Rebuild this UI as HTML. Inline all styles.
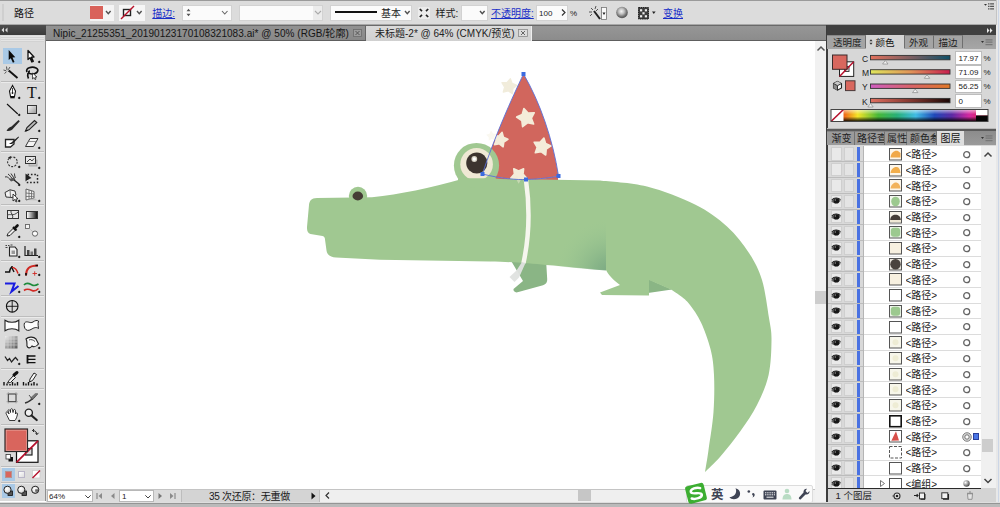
<!DOCTYPE html>
<html lang="zh"><head><meta charset="utf-8"><title>Illustrator</title><style>
*{box-sizing:border-box;margin:0;padding:0}
html,body{width:1000px;height:507px;overflow:hidden;background:#fff}
body{position:relative;font-family:"Liberation Sans","Noto Sans CJK SC",sans-serif;font-size:10px;color:#1a1a1a;line-height:1}
.a{position:absolute}
.t{position:absolute;white-space:nowrap;line-height:12px;height:12px}
.lnk{color:#1a2fc8;text-decoration:underline}
.wb{position:absolute;background:#fff;border:1px solid #c9c9c9}
svg{position:absolute;overflow:visible}
</style></head><body>
<div class="a" style="left:46px;top:41px;width:769px;height:448px;background:#fff"></div>
<svg style="left:0;top:0" width="1000" height="507" viewBox="0 0 1000 507">
<defs>
<radialGradient id="sh" gradientUnits="userSpaceOnUse" cx="610" cy="274" r="56"><stop offset="0" stop-color="#78a682"/><stop offset="0.3" stop-color="#84b287" stop-opacity="0.85"/><stop offset="0.65" stop-color="#93bf8e" stop-opacity="0.5"/><stop offset="1" stop-color="#9fc993" stop-opacity="0"/></radialGradient>
<clipPath id="hatclip"><path d="M523.500 74 C512 98 494 138 482.500 174 C500 178.500 518 180 526 179.500 C540 179 552 177.500 558.500 176 C553 140 540 102 523.500 74 Z"/></clipPath>
</defs>
<polygon points="510.4,78.6 512.2,83.4 516.9,85.4 512.9,88.6 512.5,93.7 508.2,90.8 503.2,92.1 504.6,87.1 501.9,82.7 507.1,82.5" fill="#f1ecdb" stroke="#f1ecdb" stroke-width="1.200" stroke-linejoin="round"/>
<polygon points="491.0,130.5 493.1,133.4 496.6,133.9 494.4,136.7 495.1,140.2 491.8,139.0 488.7,140.7 488.7,137.2 486.1,134.8 489.5,133.7" fill="#faf8f0"/>
<path d="M523.500 74 C512 98 494 138 482.500 174 C500 178.500 518 180 526 179.500 C540 179 552 177.500 558.500 176 C553 140 540 102 523.500 74 Z" fill="#d1665d"/>
<path d="M484 174.300 C500 178.500 518 180 526 179.500 C540 179 552 177.500 558 176 L558 181 L484 181 Z" fill="#d1665d"/>
<g clip-path="url(#hatclip)" fill="#f4ecd9" stroke="#f4ecd9" stroke-width="1.600" stroke-linejoin="round">
<polygon points="523.9,108.5 528.1,113.0 534.3,112.7 531.4,118.2 533.6,124.0 527.5,122.8 522.6,126.7 521.8,120.5 516.6,117.1 522.2,114.5"/>
<polygon points="543.9,138.0 545.6,143.5 551.0,145.9 546.2,149.2 545.7,155.0 541.0,151.6 535.3,152.8 537.2,147.3 534.2,142.3 540.0,142.4"/>
<polygon points="502.1,132.4 503.4,137.2 507.9,139.3 503.8,142.0 503.1,146.8 499.3,143.8 494.5,144.7 496.2,140.1 493.9,135.8 498.8,136.0"/>
<polygon points="518.7,183.8 516.1,179.1 510.8,178.1 514.4,174.1 513.8,168.8 518.7,171.0 523.6,168.8 523.0,174.1 526.6,178.1 521.3,179.1"/>
<polygon points="510.4,78.6 512.2,83.4 516.9,85.4 512.9,88.6 512.5,93.7 508.2,90.8 503.2,92.1 504.6,87.1 501.9,82.7 507.1,82.5"/>
</g>
<path d="M510 259 L523 281 L513.500 289 C513 291 515 292.800 517.500 292.300 L543 285.200 C546 284.300 547.500 282 547.200 279 L546 259 Z" fill="#8ab585"/>
<path d="M648 279 L672 289.500 L648 293 Z" fill="#8ab585"/>
<polygon points="517.0,175.0 518.9,178.3 522.7,179.1 520.1,182.0 520.5,185.9 517.0,184.3 513.5,185.9 513.9,182.0 511.3,179.1 515.1,178.3" fill="#eee9d6"/>
<path d="M317 198 L372 197.300 C400 194.300 430 188 462 179 C475 176 490 178 500 179 L600 180.500 C607.8 181.5 631.2 182.5 647.0 186.5 C662.8 190.5 681.7 197.8 695.0 204.5 C708.3 211.2 718.0 218.4 727.0 226.5 C736.0 234.6 743.2 244.1 749.0 253.0 C754.8 261.9 758.7 269.2 762.0 280.0 C765.3 290.8 767.4 308.0 769.0 318.0 C770.6 328.0 771.6 330.5 771.5 340.0 C771.4 349.5 771.0 364.2 768.6 375.0 C766.2 385.8 761.7 395.7 757.0 405.0 C752.3 414.3 746.7 422.3 740.5 431.0 C734.3 439.7 725.9 450.2 720.0 457.0 C714.1 463.8 707.5 469.5 705.0 472.0 C705.6 468.3 707.1 460.0 708.5 450.0 C709.9 440.0 712.6 424.5 713.5 412.0 C714.4 399.5 714.5 385.5 714.0 375.0 C713.5 364.5 712.7 357.8 710.5 349.0 C708.3 340.2 704.4 329.8 701.0 322.5 C697.6 315.2 693.2 309.2 690.0 305.0 C686.8 300.8 685.2 299.6 682.0 297.0 C678.8 294.4 672.8 290.8 671.0 289.5 L649 280 L649 295.500 L602 295 L600 292.500 L620 285 C612 279 608 274 606 270 L606 270 C590 269 565 266.500 546 265 C530 263.600 515 262 490 261.500 L380 259.800 L336 257.600 C331 257.300 327 255 326.500 250.500 L325 239.500 C325 238 324.500 236.500 322.500 236 L310.500 234 C308 233.500 306.800 231 307 227 L309 205 C309.500 201 311 198 317 198 Z" fill="#a0c891"/>
<path d="M540 215 L606 215 L606 270.500 C590 269.500 565 267 540 264.800 Z" fill="url(#sh)"/>
<polygon points="518.7,183.8 516.1,179.1 510.8,178.1 514.4,174.1 513.8,168.8 518.7,171.0 523.6,168.8 523.0,174.1 526.6,178.1 521.3,179.1" fill="#f4ecd9" opacity="0.450"/>
<circle cx="358" cy="196" r="9.200" fill="#a0c891"/>
<ellipse cx="357.800" cy="196" rx="5.300" ry="4.400" fill="#453c35"/>
<circle cx="476.500" cy="165.500" r="22.600" fill="#a0c891"/>
<circle cx="476.600" cy="164.200" r="16.300" fill="#efe8d4"/>
<circle cx="476.800" cy="163" r="10.600" fill="#3d342f"/>
<circle cx="474.300" cy="159" r="2.900" fill="#d8d2c4"/>
<circle cx="474.300" cy="159" r="1.700" fill="#fff"/>
<path d="M458 178.300 L496 178.300 L496 186 L458 186 Z" fill="#a0c891"/>
<path d="M526 180 C529.500 205 529.500 235 523.500 263" fill="none" stroke="#f6f6ee" stroke-width="4.500"/>
<path d="M522 262 L525.500 263 L519 277.500 L514.500 282 L509.500 277 L516.500 270.500 Z" fill="#dfe2df" opacity="0.950"/>
<path d="M523.500 74 C512 98 494 138 482.500 174 C500 178.500 518 180 526 179.500 C540 179 552 177.500 558.500 176 C553 140 540 102 523.500 74 Z" fill="none" stroke="#5a6fd8" stroke-width="0.9"/>
<rect x="521.5" y="72" width="4" height="4" fill="#3b6be0"/>
<rect x="480.5" y="172" width="4" height="4" fill="#3b6be0"/>
<rect x="556.5" y="174" width="4" height="4" fill="#3b6be0"/>
<rect x="524" y="177.5" width="4" height="4" fill="#3b6be0"/>
</svg>
<div class="a" style="left:815px;top:41px;width:11px;height:448px;background:#f1f1f1"></div>
<div class="a" style="left:815px;top:291px;width:11px;height:12.500px;background:#cdcdcd"></div>
<svg style="left:817px;top:46px" width="8" height="6"><path d="M0.500 4.500 L4 1 L7.500 4.500" fill="none" stroke="#555" stroke-width="1.500"/></svg>
<div class="a" style="left:0px;top:0px;width:1000px;height:25px;background:#dcdcdc;"></div>
<div class="a" style="left:0px;top:0px;width:1000px;height:1px;background:#9a9a9a;"></div>
<div class="a" style="left:0px;top:24px;width:1000px;height:1px;background:#a8a8a8;"></div>
<div class="a" style="left:2px;top:4px;width:2px;height:17px;background:#cfcfcf;"></div>
<div class="t " style="left:14px;top:7.9px;font-size:10px;color:#111">路径</div>
<div class="a" style="left:90px;top:4.5px;width:24px;height:16px;background:#f4f4f4;"></div>
<div class="a" style="left:90px;top:6px;width:13px;height:13px;background:#d9625a;"></div>
<svg style="left:106px;top:11px" width="4.6" height="3.7"><path d="M0 0 L2.3 2.7 L4.6 0" fill="none" stroke="#505050" stroke-width="1.4"/></svg>
<div class="a" style="left:119px;top:4.5px;width:26px;height:16px;background:#f6f6f6;"></div>
<svg style="left:120px;top:5px" width="15" height="15"><rect x="3.5" y="4.500" width="7" height="6" fill="#fff" stroke="#222" stroke-width="1.4"/><path d="M1 14 L14 1" stroke="#b8122a" stroke-width="1.5"/></svg>
<svg style="left:137px;top:11px" width="4.6" height="3.7"><path d="M0 0 L2.3 2.7 L4.6 0" fill="none" stroke="#505050" stroke-width="1.4"/></svg>
<div class="t lnk" style="left:152.3px;top:7.9px;">描边:</div>
<div class="a" style="left:182px;top:4.5px;width:50px;height:16px;background:#fbfbfb;border:1px solid #d2d2d2"></div>
<svg style="left:186px;top:8px" width="5" height="10"><path d="M0.500 3.300 L2.500 0.800 L4.500 3.300 Z M0.500 5.700 L2.500 8.200 L4.500 5.700 Z" fill="#555"/></svg>
<svg style="left:221.5px;top:11px" width="5.5" height="4"><path d="M0 0 L2.75 3 L5.5 0" fill="none" stroke="#666" stroke-width="1.1"/></svg>
<div class="a" style="left:239px;top:4.5px;width:84px;height:16px;background:#fbfbfb;border:1px solid #d2d2d2"></div>
<div class="a" style="left:313px;top:5.5px;width:9px;height:14px;background:#ececec;"></div>
<svg style="left:314.5px;top:11px" width="6" height="4"><path d="M0 0 L3.0 3 L6 0" fill="none" stroke="#aaa" stroke-width="1.1"/></svg>
<div class="a" style="left:330px;top:4.5px;width:82px;height:16px;background:#fbfbfb;border:1px solid #d2d2d2"></div>
<div class="a" style="left:334.5px;top:11.2px;width:42px;height:2px;background:#111;"></div>
<div class="t " style="left:381px;top:7.9px;">基本</div>
<svg style="left:404.5px;top:11px" width="4.6" height="3.7"><path d="M0 0 L2.3 2.7 L4.6 0" fill="none" stroke="#505050" stroke-width="1.4"/></svg>
<svg style="left:417.500px;top:7px" width="12" height="12"><rect x="0" y="0" width="12" height="12" rx="1.500" fill="#ececec"/><path d="M1.800 2 L4 4.200 M10.200 2 L8 4.200 M1.800 10 L4 7.800 M10.200 10 L8 7.800" stroke="#222" stroke-width="1.700"/></svg>
<div class="t " style="left:435.5px;top:7.9px;">样式:</div>
<div class="a" style="left:461px;top:4.5px;width:27px;height:16px;background:#fbfbfb;border:1px solid #d2d2d2"></div>
<svg style="left:479.5px;top:11px" width="4.6" height="3.7"><path d="M0 0 L2.3 2.7 L4.6 0" fill="none" stroke="#505050" stroke-width="1.4"/></svg>
<div class="t lnk" style="left:491px;top:7.9px;">不透明度:</div>
<div class="a" style="left:536px;top:4.5px;width:32px;height:16px;background:#fbfbfb;border:1px solid #d2d2d2"></div>
<div class="t " style="left:539px;top:8.3px;font-size:8px">100</div>
<svg style="left:561px;top:9px" width="5" height="8"><path d="M1 0.500 L4 3.5 L1 6.500" fill="none" stroke="#333" stroke-width="1.2"/></svg>
<div class="t " style="left:570px;top:8.3px;font-size:8px">%</div>
<svg style="left:587px;top:5px" width="22" height="16"><path d="M7 6 L13 14" stroke="#222" stroke-width="2"/><path d="M4 3 L6 5 M9 1 L8 4 M2 7 L5 7 M11 4 L9 6 M3 11 L5 9" stroke="#555" stroke-width="1"/><rect x="14.5" y="2.500" width="5" height="12" fill="#fafafa" stroke="#777" stroke-width="0.8"/><path d="M15.500 7.5 L18.5 7.5 L17 10 Z" fill="#222"/></svg>
<svg style="left:615px;top:5px" width="14" height="14"><defs><radialGradient id="gl" cx="0.45" cy="0.4" r="0.6"><stop offset="0" stop-color="#f4f4f4"/><stop offset="0.4" stop-color="#c0c0c0"/><stop offset="0.8" stop-color="#6a6a6a"/><stop offset="1" stop-color="#555"/></radialGradient></defs><circle cx="7" cy="7.500" r="5.8" fill="url(#gl)"/></svg>
<svg style="left:638px;top:6.500px" width="20" height="14"><rect x="0.500" y="0.500" width="10" height="11.500" fill="#3c3c3c" stroke="#222" stroke-width="1" stroke-dasharray="1.500 0.700"/><g fill="#ececec"><rect x="2" y="2.200" width="2.200" height="2.200"/><rect x="6.800" y="2.200" width="2.200" height="2.200"/><rect x="4.400" y="5.200" width="2.200" height="2.200"/><rect x="2" y="8.200" width="2.200" height="2.200"/><rect x="6.800" y="8.200" width="2.200" height="2.200"/></g><path d="M14 4.500 L17.600 4.500 L15.800 7 Z" fill="#222"/></svg>
<div class="t lnk" style="left:663px;top:7.9px;">变换</div>
<svg style="left:983.500px;top:3px" width="10" height="8"><path d="M0 1 L3 1 L1.500 2.800 Z" fill="#333"/><path d="M4 0.800 H10 M4 3.300 H10 M4 5.800 H10" stroke="#555" stroke-width="1.200" stroke-dasharray="1.500 0.600 10"/></svg>
<div class="a" style="left:0px;top:25px;width:826px;height:16px;background:linear-gradient(#979797,#8b8b8b);"></div>
<div class="a" style="left:46px;top:25px;width:780px;height:1px;background:#6a6a6a;"></div>
<div class="a" style="left:46px;top:26px;width:320px;height:14px;background:linear-gradient(#929292,#888888);border-right:1px solid #666"></div>
<div class="a" style="left:46px;top:40px;width:780px;height:1px;background:#5e5e5e;"></div>
<div class="t " style="left:53px;top:27.5px;font-size:10px;color:#151515;letter-spacing:0.050px">Nipic_21255351_20190123170108321083.ai* @ 50% (RGB/轮廓)</div>
<svg style="left:353px;top:29px" width="9" height="8"><rect x="0.5" y="0.500" width="8" height="7" fill="#9c9c9c" stroke="#6c6c6c" stroke-width="0.8"/><path d="M2.500 2 L6.500 6 M6.500 2 L2.500 6" stroke="#555" stroke-width="1"/></svg>
<div class="a" style="left:366px;top:25.5px;width:165.5px;height:15.5px;background:linear-gradient(#dadada,#d0d0d0);border-right:1px solid #eee"></div>
<div class="t " style="left:375px;top:27.5px;font-size:10px;color:#222">未标题-2* @ 64% (CMYK/预览)</div>
<svg style="left:518px;top:29px" width="10" height="8"><rect x="0.5" y="0.500" width="9" height="7" fill="#dcdcdc" stroke="#8a8a8a" stroke-width="0.8"/><path d="M3 2 L7 6 M7 2 L3 6" stroke="#666" stroke-width="1"/></svg>
<div class="a" style="left:0;top:25px;width:46px;height:476px;background:#dadada;border-right:1px solid #8f8f8f"></div>
<div class="a" style="left:0;top:25px;width:46px;height:10px;background:linear-gradient(#4e4e4e,#3a3a3a)"></div>
<svg style="left:0.8px;top:27px" width="8" height="6"><path d="M3 0.500 L0.500 3 L3 5.500 Z M6.500 0.500 L4 3 L6.500 5.500 Z" fill="#ddd"/></svg>
<div class="a" style="left:1px;top:36px;width:43px;height:6px;background:repeating-linear-gradient(#e4e4e4 0,#e4e4e4 1px,#d2d2d2 1px,#d2d2d2 2px)"></div>
<div class="a" style="left:2.500px;top:47.500px;width:19.500px;height:16.500px;background:#a9c9e6"></div>
<svg style="left:0px;top:0px" width="46" height="110"><path d="M8.700 50 L8.700 60 L10.800 58.200 L12.900 62.800 L14.500 62 L12.500 57.500 L15.300 57.200 Z" fill="#0a0a0a"/><path d="M28 50.500 L28 59.500 L30 57.800 L31.800 62 L33.300 61.300 L31.500 57.200 L34 57 Z" fill="#fff" stroke="#111" stroke-width="1.300" stroke-linejoin="round"/><path d="M30 57.800 L31.800 62 L33.300 61.300 L31.500 57.200 Z" fill="#111"/><path d="M8.800 70.500 L17.500 78" stroke="#111" stroke-width="1.900"/><path d="M6.500 66.500 L7 70 M3.500 70 L6.200 70.800 M10 67 L8.200 69.800 M4.500 73.500 L6.500 71.800 M9.500 72 L7.800 71" stroke="#444" stroke-width="0.9"/><path d="M27 72 C25 68 32 66 36 68 C40 70 37 74 32 74 C28 74 28 71 30 71 M28 73 C27.500 75 27.500 77 28.500 78.500" fill="none" stroke="#111" stroke-width="1.700"/><path d="M32.500 73 L32.500 79 L34 77.600 L35 79.600 L36 79.100 L35 77.100 L37 77 Z" fill="#fff" stroke="#111" stroke-width="0.7"/><path d="M12.500 85.500 L9.500 91 L10.500 96.500 L14.500 96.500 L15.500 91 Z" fill="#fff" stroke="#111" stroke-width="1.100"/><path d="M12.500 88 L12.500 92.500" stroke="#111" stroke-width="0.8"/><circle cx="12.500" cy="93" r="0.9" fill="#111"/><rect x="10.300" y="96.500" width="4.400" height="1.800" fill="#111"/><path d="M7 104 L17.800 114" stroke="#111" stroke-width="1.100"/></svg>
<div class="t" style="left:27px;top:85px;font-family:'Liberation Serif',serif;font-size:16px;line-height:16px;height:16px;color:#111">T</div>
<div class="a" style="left:38.3px;top:60.8px;width:2.400px;height:2.400px;background:#111;transform:rotate(45deg)"></div>
<div class="a" style="left:18.3px;top:96.8px;width:2.400px;height:2.400px;background:#111;transform:rotate(45deg)"></div>
<div class="a" style="left:38.3px;top:96.8px;width:2.400px;height:2.400px;background:#111;transform:rotate(45deg)"></div>
<div class="a" style="left:1px;top:81px;width:43px;height:1px;background:#bdbdbd"></div><div class="a" style="left:1px;top:82px;width:43px;height:1px;background:#ebebeb"></div>
<div class="a" style="left:18.3px;top:113.8px;width:2.400px;height:2.400px;background:#111;transform:rotate(45deg)"></div>
<div class="a" style="left:38.3px;top:113.8px;width:2.400px;height:2.400px;background:#111;transform:rotate(45deg)"></div>
<div class="a" style="left:26.500px;top:104.500px;width:10.500px;height:9px;border:1px solid #333;background:linear-gradient(135deg,#f4f4f4,#9a9a9a)"></div>
<svg style="left:0px;top:100px" width="46" height="60"><path d="M6.500 30.800 C8 28 10 27 11.500 26.500 L18.500 20 L19.800 21.300 L13.200 28.500 C12 30.500 9.500 31.500 6.500 30.800 Z" fill="#2a2a2a"/><path d="M25.500 31 L27 27.500 L34.500 20.500 L36.800 22.500 L29 29.800 Z" fill="#bbb" stroke="#222" stroke-width="1.100"/><path d="M25.500 31 L27.800 30.300" stroke="#111" stroke-width="1.200"/><path d="M5.500 39.500 L14 39.500 L14 44 L10.500 47 L5.500 47 Z" fill="#fff" stroke="#222" stroke-width="1.300"/><path d="M9 43.500 C11 43 12 42 13 41 L18.500 36.500 L19 37.200 L14 42.500 C13 44 11 44.500 9 43.500 Z" fill="#222"/><path d="M30 38.500 L38 38.500 L33.500 46.500 L25.500 46.500 Z" fill="#f4f4f4" stroke="#333" stroke-width="1"/><path d="M28.500 41.500 L36.300 41.500" stroke="#777" stroke-width="0.800"/></svg>
<div class="a" style="left:38.3px;top:130.3px;width:2.400px;height:2.400px;background:#111;transform:rotate(45deg)"></div>
<div class="a" style="left:38.3px;top:146.8px;width:2.400px;height:2.400px;background:#111;transform:rotate(45deg)"></div>
<div class="a" style="left:1px;top:150.5px;width:43px;height:1px;background:#bdbdbd"></div><div class="a" style="left:1px;top:151.5px;width:43px;height:1px;background:#ebebeb"></div>
<svg style="left:0px;top:150px" width="46" height="60"><circle cx="12.400" cy="11.800" r="4.800" fill="none" stroke="#333" stroke-width="1.100" stroke-dasharray="2 1.300"/><path d="M8 7.500 L11 6 L10.500 9.500 Z" fill="#222"/><rect x="29" y="10" width="8" height="6" fill="#c4c4c4" stroke="#999" stroke-width="0.700"/><rect x="25.500" y="6.500" width="10" height="7" fill="#e8e8e8" stroke="#333" stroke-width="1"/><path d="M27 12 L30 9 L32 11 L34 8.500" fill="none" stroke="#333" stroke-width="0.900"/><path d="M5 27 C8 26 9 29 11 30 M8 24 C10 25 11 28 13 29 M11 23.500 C12 25 13 27 14.500 28.500 M14.500 23.500 C14.500 25.500 15 27 15.500 28" fill="none" stroke="#333" stroke-width="1"/><path d="M9 29 L14 27.500 L15.500 30 L11 31.500 Z" fill="#555"/><path d="M14 30 L19 34" stroke="#222" stroke-width="1.500"/><rect x="27.500" y="24.500" width="10" height="8" fill="none" stroke="#222" stroke-width="1.500" stroke-dasharray="1.600 1.800"/><path d="M25.500 23.500 L25.500 31.500 L27.500 29.800 L31.500 28 Z" fill="#222"/><path d="M5 42.500 L10 39.800 L15 41 L16 45 L12 47.500 L6 47 Z" fill="#f2f2f2" stroke="#333" stroke-width="1"/><path d="M10 39.800 L10.500 47.300" stroke="#555" stroke-width="0.800"/><path d="M13 44 L13 51 L14.800 49.500 L16 52 L17 51.500 L15.800 49 L18 48.800 Z" fill="#fff" stroke="#111" stroke-width="0.800"/><path d="M26 39 L34 41.500 L34 48 L26 50 Z" fill="#f2f2f2" stroke="#555" stroke-width="0.900"/><path d="M29 40 L29 49.300 M31.500 40.800 L31.500 48.600 M26 43 L34 44 M26 46.500 L34 46.300" stroke="#666" stroke-width="0.800"/><path d="M34 48 L38 50.500 L26 50 Z" fill="#aaa" opacity="0.600"/></svg>
<div class="a" style="left:18.3px;top:166.3px;width:2.400px;height:2.400px;background:#111;transform:rotate(45deg)"></div>
<div class="a" style="left:38.3px;top:166.8px;width:2.400px;height:2.400px;background:#111;transform:rotate(45deg)"></div>
<div class="a" style="left:18.3px;top:183.8px;width:2.400px;height:2.400px;background:#111;transform:rotate(45deg)"></div>
<div class="a" style="left:18.3px;top:200.3px;width:2.400px;height:2.400px;background:#111;transform:rotate(45deg)"></div>
<div class="a" style="left:38.3px;top:199.8px;width:2.400px;height:2.400px;background:#111;transform:rotate(45deg)"></div>
<div class="a" style="left:1px;top:204px;width:43px;height:1px;background:#bdbdbd"></div><div class="a" style="left:1px;top:205px;width:43px;height:1px;background:#ebebeb"></div>
<div class="a" style="left:6.500px;top:210px;width:12px;height:8.500px;border:1px solid #333;background:#e6e6e6"></div>
<svg style="left:0px;top:205px" width="46" height="60"><path d="M7 10.500 C10 8 13 12 18 7 M11 5.500 C10 8 14 10 12.500 13.500" fill="none" stroke="#444" stroke-width="1"/><path d="M7 31 L8 28.500 L13.500 23 L15.500 25 L10 30.500 Z" fill="#eee" stroke="#222" stroke-width="1"/><path d="M13 22 L16.500 25.500" stroke="#111" stroke-width="2"/><path d="M14.500 23.500 L17.500 20.500" stroke="#111" stroke-width="2.600" stroke-linecap="round"/><rect x="25.500" y="19.500" width="4" height="4" fill="#f4f4f4" stroke="#666" stroke-width="0.900"/><path d="M29.500 23.500 L33 27" stroke="#aaa" stroke-width="1" stroke-dasharray="1 1"/><circle cx="35" cy="28.600" r="2.600" fill="#fafafa" stroke="#555" stroke-width="0.900"/><path d="M9.500 42 L15 42 L17 44.500 L17 51 L9.500 51 Z" fill="#f0f0f0" stroke="#222" stroke-width="1.100"/><rect x="11.500" y="45.500" width="3.500" height="3.500" fill="#999"/><path d="M5.500 40.500 H7 M8 40.500 H9.500 M5.500 42.500 H7.500 M10.500 40 H12.500" stroke="#333" stroke-width="0.900"/><path d="M25 41 L25 50.500 L38 50.500" fill="none" stroke="#222" stroke-width="1.200"/><rect x="27" y="45" width="2.500" height="5" fill="#444"/><rect x="30.500" y="46.500" width="2.500" height="3.500" fill="#777"/><rect x="34" y="43.500" width="2.500" height="6.500" fill="#444"/></svg>
<div class="a" style="left:26px;top:210.500px;width:12px;height:8px;border:1px solid #333;background:linear-gradient(90deg,#fff,#111)"></div>
<div class="a" style="left:18.3px;top:235.8px;width:2.400px;height:2.400px;background:#111;transform:rotate(45deg)"></div>
<div class="a" style="left:18.3px;top:255.8px;width:2.400px;height:2.400px;background:#111;transform:rotate(45deg)"></div>
<div class="a" style="left:38.3px;top:255.8px;width:2.400px;height:2.400px;background:#111;transform:rotate(45deg)"></div>
<div class="a" style="left:1px;top:239.5px;width:43px;height:1px;background:#bdbdbd"></div><div class="a" style="left:1px;top:240.5px;width:43px;height:1px;background:#ebebeb"></div>
<div class="a" style="left:1px;top:259.5px;width:43px;height:1px;background:#bdbdbd"></div><div class="a" style="left:1px;top:260.5px;width:43px;height:1px;background:#ebebeb"></div>
<svg style="left:0px;top:260px" width="46" height="60"><path d="M5 12 L9.500 12 C10 9 11 7.500 12 7.500 L12 6" fill="none" stroke="#111" stroke-width="1.600"/><path d="M12 7.500 C15 7.500 17 10 18 13.500" fill="none" stroke="#d0201a" stroke-width="1.500"/><path d="M12 8 L14 12" stroke="#111" stroke-width="1.400"/><path d="M26 15.500 C26 9 29 5.500 38 5.500" fill="none" stroke="#cf2a24" stroke-width="1.900"/><path d="M26 15.500 L26 13 M35.500 5.500 L38 5.500" stroke="#111" stroke-width="1.700"/><path d="M32.500 13.500 H37 M34.700 11.300 V15.700" stroke="#cf2a24" stroke-width="0.900"/><path d="M5 23.500 L14.500 23.500 L11.500 31.500 L18.500 26" fill="none" stroke="#1a1de0" stroke-width="2.100"/><path d="M24 25 C27 21.500 30 24 32 25 C34 26 36 25.500 38.500 24" fill="none" stroke="#1d8a3a" stroke-width="1.700"/><path d="M24 30.500 C27 28 30 29.500 32 30.500 C34 31.500 36 31 38.500 28.500" fill="none" stroke="#d22a24" stroke-width="1.700"/><circle cx="12.200" cy="46.300" r="5.800" fill="none" stroke="#111" stroke-width="1.100"/><path d="M6.400 46.300 H18 M12.200 40.500 V52.100" stroke="#111" stroke-width="0.900"/></svg>
<div class="a" style="left:18.3px;top:273.8px;width:2.400px;height:2.400px;background:#111;transform:rotate(45deg)"></div>
<div class="a" style="left:38.3px;top:273.8px;width:2.400px;height:2.400px;background:#111;transform:rotate(45deg)"></div>
<div class="a" style="left:18.3px;top:290.8px;width:2.400px;height:2.400px;background:#111;transform:rotate(45deg)"></div>
<div class="a" style="left:38.3px;top:290.8px;width:2.400px;height:2.400px;background:#111;transform:rotate(45deg)"></div>
<div class="a" style="left:1px;top:295px;width:43px;height:1px;background:#bdbdbd"></div><div class="a" style="left:1px;top:296px;width:43px;height:1px;background:#ebebeb"></div>
<div class="a" style="left:1px;top:315.5px;width:43px;height:1px;background:#bdbdbd"></div><div class="a" style="left:1px;top:316.5px;width:43px;height:1px;background:#ebebeb"></div>
<svg style="left:0px;top:315px" width="46" height="60"><path d="M5 5.200 C9 8 15 8 18.800 5.200 L18.800 15.800 C15 13 9 13 5 15.800 Z" fill="#fdfdfd" stroke="#222" stroke-width="1.100"/><path d="M24.500 8 C27 5 30 9 33 7 C35 5.500 37 5 38.500 6 C37.500 9 38.500 12 38.500 13.500 C36 11.500 33.500 13 31 14.500 C28.500 16 26 15.500 25 13.500 C24 11.500 24 9.500 24.500 8 Z" fill="#fdfdfd" stroke="#222" stroke-width="1"/><defs><linearGradient id="gg" x1="0" y1="0" x2="1" y2="1"><stop offset="0" stop-color="#eee"/><stop offset="1" stop-color="#555"/></linearGradient></defs><rect x="5" y="21" width="12.500" height="12.500" fill="url(#gg)"/><path d="M8 21 V33.500 M11 21 V33.500 M14 21 V33.500 M5 24 H17.500 M5 27 H17.500 M5 30 H17.500" stroke="#ddd" stroke-width="0.700" opacity="0.800"/><path d="M26 24 C29 21 34 22 36 24 L38.500 29 C36 32 34 32.500 32 31 C30 34 27.500 33 27 31 C26.500 29 28 27.500 26 24 Z" fill="#f6f6f6" stroke="#222" stroke-width="1.100"/><path d="M29 25 C31 24 33.500 25 35 26.500" fill="none" stroke="#333" stroke-width="0.900"/><path d="M5 41.500 L7.500 45.500 L9.500 43.500 L11.500 47 L14 44 L15.500 42.500 L18 45.500" fill="none" stroke="#222" stroke-width="1.200"/><path d="M27.500 40 V48.500" stroke="#111" stroke-width="1.800"/><path d="M27.500 41 H35.500 M27.500 44.300 H35.500 M27.500 47.600 H35.500" stroke="#111" stroke-width="1.300"/></svg>
<div class="a" style="left:38.3px;top:347.3px;width:2.400px;height:2.400px;background:#111;transform:rotate(45deg)"></div>
<div class="a" style="left:18.3px;top:363.3px;width:2.400px;height:2.400px;background:#111;transform:rotate(45deg)"></div>
<div class="a" style="left:1px;top:367.5px;width:43px;height:1px;background:#bdbdbd"></div><div class="a" style="left:1px;top:368.5px;width:43px;height:1px;background:#ebebeb"></div>
<svg style="left:0px;top:368px" width="46" height="60"><path d="M7.500 15 L9 12.500 L13.500 7.500 L15.500 9.500 L10.500 14.500 Z" fill="#f4f4f4" stroke="#222" stroke-width="1"/><path d="M14 7 L17 4.500" stroke="#111" stroke-width="3" stroke-linecap="round"/><path d="M4 14 V17.500 M7 15.500 V17.500 M10 16 V17.500 M12.500 14 V17.500 M15 15.500 V17.500 M17.500 14 V17.500" stroke="#111" stroke-width="1.400"/><path d="M29.500 14 L30 11 L34 5 L36.500 6.500 L32.500 12.500 Z" fill="#f8f8f8" stroke="#222" stroke-width="1"/><path d="M23.500 14 V17.500 M26 15.500 V17.500 M28.500 14 V17.500 M31.500 15.500 V17.500 M34 14 V17.500 M37 15.500 V17.500" stroke="#111" stroke-width="1.400"/><rect x="8.300" y="26" width="7.700" height="7.700" fill="#dcdcdc" stroke="#333" stroke-width="1"/><path d="M8.300 24 V26 M16 24 V26 M8.300 33.700 V35.500 M16 33.700 V35.500 M6.500 26 H8.300 M16 26 H18 M6.500 33.700 H8.300 M16 33.700 H18" stroke="#999" stroke-width="0.700"/><path d="M25 35 C29 34 33 31 37.500 25.500" fill="none" stroke="#333" stroke-width="1.300"/><path d="M30 30 L35.500 25 L37.500 26 L32 31.500 Z" fill="#777"/><path d="M29 27 L33 32" stroke="#444" stroke-width="0.900"/><path d="M7 47.500 C6 45.500 5.500 44.500 6.500 44 C7.500 43.500 8.500 45 9 46 L8 42.500 C8 41.500 9.500 41.500 10 42.500 L10.500 44.500 L10.500 41.500 C11 40.500 12.500 40.500 12.500 41.500 L13 44.500 L13.500 42 C14 41 15.500 41.500 15.500 42.500 L15.500 46 C16 44.500 17.500 44.500 17.500 46 C17 49 16 51 15 52.500 L9.500 52.500 Z" fill="#fbfbfb" stroke="#222" stroke-width="0.900"/><circle cx="28.800" cy="44.800" r="3.600" fill="#f0f0f0" stroke="#222" stroke-width="1.300"/><path d="M31.500 47.500 L36.700 52" stroke="#222" stroke-width="2.200" stroke-linecap="round"/></svg>
<div class="a" style="left:38.3px;top:402.8px;width:2.400px;height:2.400px;background:#111;transform:rotate(45deg)"></div>
<div class="a" style="left:18.3px;top:420.3px;width:2.400px;height:2.400px;background:#111;transform:rotate(45deg)"></div>
<div class="a" style="left:1px;top:388px;width:43px;height:1px;background:#bdbdbd"></div><div class="a" style="left:1px;top:389px;width:43px;height:1px;background:#ebebeb"></div>
<div class="a" style="left:1px;top:423.5px;width:43px;height:1px;background:#bdbdbd"></div><div class="a" style="left:1px;top:424.5px;width:43px;height:1px;background:#ebebeb"></div>
<svg style="left:0px;top:425px" width="46" height="45"><rect x="16.500" y="15.800" width="21.500" height="21.500" fill="#fff" stroke="#111" stroke-width="1.200"/><rect x="25.500" y="23.500" width="6.500" height="6.500" fill="#ddd" stroke="#222" stroke-width="1.200"/><path d="M16.500 37.300 L38 15.800" stroke="#b5102c" stroke-width="1.800"/><rect x="5" y="4" width="22.500" height="22.500" fill="#d9655d" stroke="#2a2a2a" stroke-width="1.200"/><rect x="6.200" y="5.200" width="20.100" height="20.100" fill="none" stroke="#e9a9a2" stroke-width="0.600"/><path d="M32.500 5.500 C35 5.500 37 7 37 9.500 M37 9.500 L35.300 8 M37 9.500 L38.500 7.800 M32.500 5.500 L34 4 M32.500 5.500 L34 7" fill="none" stroke="#222" stroke-width="1"/><rect x="8.500" y="32" width="4.500" height="4.500" fill="#111"/><rect x="6" y="29.500" width="4.500" height="4.500" fill="#fff" stroke="#333" stroke-width="0.800"/></svg>
<div class="a" style="left:1px;top:466px;width:43px;height:1px;background:#bdbdbd"></div><div class="a" style="left:1px;top:467px;width:43px;height:1px;background:#ebebeb"></div>
<div class="a" style="left:2px;top:467.500px;width:12.500px;height:13.500px;background:#a9c9e6"></div>
<div class="a" style="left:4.500px;top:470.500px;width:7.500px;height:7.500px;background:#d9655d;border:0.500px solid #b9908c"></div>
<div class="a" style="left:17.500px;top:470.500px;width:7.500px;height:7.500px;background:linear-gradient(135deg,#fff,#ddd);border:1px solid #b9b5c8"></div>
<svg style="left:31.5px;top:470px" width="9" height="9"><rect x="0.500" y="0.500" width="7.500" height="7.500" fill="#fff" stroke="#ccc" stroke-width="0.800"/><path d="M0.500 8 L8 0.500" stroke="#b5102c" stroke-width="1.500"/></svg>
<div class="a" style="left:1px;top:481.5px;width:43px;height:1px;background:#bdbdbd"></div><div class="a" style="left:1px;top:482.5px;width:43px;height:1px;background:#ebebeb"></div>
<div class="a" style="left:2px;top:483.500px;width:12.500px;height:14px;background:#a9c9e6"></div>
<svg style="left:0px;top:483px" width="46" height="16"><defs><radialGradient id="bb" cx="0.400" cy="0.350" r="0.700"><stop offset="0" stop-color="#fff"/><stop offset="0.600" stop-color="#e4e4e4"/><stop offset="1" stop-color="#999"/></radialGradient></defs><rect x="8" y="8" width="4.500" height="4.500" fill="#555" stroke="#111" stroke-width="0.800"/><circle cx="7.500" cy="6.800" r="3.600" fill="url(#bb)" stroke="#222" stroke-width="1"/><rect x="22" y="8" width="4.500" height="4.500" fill="#555" stroke="#111" stroke-width="0.800"/><circle cx="21.300" cy="6.800" r="3.600" fill="url(#bb)" stroke="#222" stroke-width="1"/><circle cx="35.200" cy="6.800" r="3.600" fill="url(#bb)" stroke="#222" stroke-width="1"/><rect x="35.200" y="6.300" width="3" height="2.500" fill="#666"/></svg>
<div class="a" style="left:826px;top:25px;width:174px;height:482px;background:#d7d7d7;"></div>
<div class="a" style="left:995.5px;top:0px;width:4.5px;height:507px;background:#e8e8e8;"></div>
<div class="a" style="left:995.5px;top:0px;width:0.8px;height:25px;background:#c4c4c4;"></div>
<div class="a" style="left:998px;top:0px;width:1px;height:507px;background:#ccd6e6;"></div>
<div class="a" style="left:826px;top:25px;width:1.6px;height:477px;background:#3c3c3c;"></div>
<div class="a" style="left:827px;top:25px;width:168.5px;height:10px;background:#404040;"></div>
<svg style="left:987px;top:28px" width="6" height="5"><path d="M0 0 L2.500 2.500 L0 5 Z M3 0 L5.500 2.500 L3 5 Z" fill="#e8e8e8"/></svg>
<div class="a" style="left:827px;top:35px;width:168.5px;height:13.5px;background:linear-gradient(#9a9a9a,#a6a6a6);"></div>
<div class="a" style="left:827px;top:35px;width:39px;height:13px;background:#a4a4a4;border-right:1px solid #6f6f6f;border-top:1px solid #888"></div>
<div class="a" style="left:866px;top:35px;width:37.5px;height:13.5px;background:#d5d5d5;"></div>
<div class="a" style="left:903.5px;top:35px;width:30px;height:13px;background:#a4a4a4;border-right:1px solid #6f6f6f;border-left:1px solid #6f6f6f;border-top:1px solid #888"></div>
<div class="a" style="left:933.5px;top:35px;width:29px;height:13px;background:#a4a4a4;border-right:1px solid #6f6f6f;border-top:1px solid #888"></div>
<div class="t" style="left:833px;top:37px;color:#222;font-size:9.500px">透明度</div>
<svg style="left:869px;top:39px" width="4" height="6"><path d="M2 0.300 L3.600 2.300 H0.400 Z M2 5.700 L3.600 3.700 H0.400 Z" fill="#333"/></svg>
<div class="t" style="left:875.5px;top:37px;color:#111;font-size:9.500px">颜色</div>
<div class="t" style="left:909px;top:37px;color:#222;font-size:9.500px">外观</div>
<div class="t" style="left:938.5px;top:37px;color:#222;font-size:9.500px">描边</div>
<svg style="left:981px;top:39px" width="12" height="7"><path d="M0 2 H3 L1.500 4 Z" fill="#333"/><path d="M4.500 0.800 H11.500 M4.500 3.200 H11.500 M4.500 5.600 H11.500" stroke="#777" stroke-width="1.200"/></svg>
<svg style="left:826px;top:48px" width="174" height="82"><rect x="13.500" y="13.800" width="14.200" height="14.600" fill="#fff" stroke="#222" stroke-width="1"/><rect x="18.500" y="18.500" width="4.500" height="5" fill="#ddd" stroke="#333" stroke-width="0.900"/><path d="M13.500 28.400 L27.700 13.800" stroke="#b5102c" stroke-width="1.500"/><rect x="6.500" y="7" width="14.500" height="14.300" fill="#d8675e" stroke="#3a2a2a" stroke-width="1"/><rect x="19.500" y="32.800" width="9.500" height="9.800" fill="#d8675e" stroke="#4a3a3a" stroke-width="1"/><path d="M7.500 35.500 L11.500 33.300 L15.500 35.500 L15.500 40 L11.500 42.200 L7.500 40 Z" fill="#fafafa" stroke="#222" stroke-width="1.100"/><path d="M7.500 35.500 L11.500 37.700 L11.500 42.200 L7.500 40 Z" fill="#8a8a8a"/><path d="M7.500 35.500 L11.500 33.300 L15.500 35.500 L11.500 37.700 Z" fill="#c8c8c8"/><path d="M7.500 35.500 L11.500 37.700 L15.500 35.500 M11.500 37.700 V42.200" fill="none" stroke="#222" stroke-width="0.900"/><defs><linearGradient id="gc"><stop offset="0" stop-color="#e2705c"/><stop offset="0.500" stop-color="#7e5f62"/><stop offset="1" stop-color="#0e5068"/></linearGradient><linearGradient id="gm"><stop offset="0" stop-color="#dfe65c"/><stop offset="0.500" stop-color="#e09458"/><stop offset="1" stop-color="#c81e50"/></linearGradient><linearGradient id="gy"><stop offset="0" stop-color="#cf5ec0"/><stop offset="0.500" stop-color="#d8646a"/><stop offset="1" stop-color="#e07828"/></linearGradient><linearGradient id="gk"><stop offset="0" stop-color="#e07060"/><stop offset="0.500" stop-color="#843830"/><stop offset="1" stop-color="#1c0806"/></linearGradient><linearGradient id="sp"><stop offset="0" stop-color="#e01818"/><stop offset="0.090" stop-color="#f07018"/><stop offset="0.170" stop-color="#f4e428"/><stop offset="0.300" stop-color="#48b838"/><stop offset="0.420" stop-color="#28b078"/><stop offset="0.540" stop-color="#40bce4"/><stop offset="0.660" stop-color="#2048b8"/><stop offset="0.770" stop-color="#5c2aa4"/><stop offset="0.880" stop-color="#d428a0"/><stop offset="1" stop-color="#e02038"/></linearGradient><linearGradient id="spv" x1="0" y1="0" x2="0" y2="1"><stop offset="0" stop-color="#fff" stop-opacity="0.600"/><stop offset="0.400" stop-color="#fff" stop-opacity="0"/><stop offset="0.600" stop-color="#000" stop-opacity="0"/><stop offset="1" stop-color="#000" stop-opacity="0.950"/></linearGradient></defs><rect x="44.500" y="7.400" width="79.500" height="4.400" fill="url(#gc)" stroke="#333" stroke-width="0.900"/><rect x="44.500" y="21.700" width="79.500" height="4.400" fill="url(#gm)" stroke="#333" stroke-width="0.900"/><rect x="44.500" y="36" width="79.500" height="4.400" fill="url(#gy)" stroke="#333" stroke-width="0.900"/><rect x="44.500" y="50.400" width="79.500" height="4.400" fill="url(#gk)" stroke="#333" stroke-width="0.900"/><path d="M59.300 12.500 L62 16 H56.600 Z" fill="#f4f4f4" stroke="#888" stroke-width="0.700"/><path d="M101 26.800 L103.700 30.300 H98.300 Z" fill="#f4f4f4" stroke="#888" stroke-width="0.700"/><path d="M89.200 41.100 L91.900 44.600 H86.500 Z" fill="#f4f4f4" stroke="#888" stroke-width="0.700"/><path d="M44.500 55.500 L47.200 59 H41.800 Z" fill="#f4f4f4" stroke="#888" stroke-width="0.700"/><rect x="5" y="61.500" width="157" height="12" fill="url(#sp)"/><rect x="5" y="61.500" width="157" height="12" fill="url(#spv)"/><rect x="5" y="61.500" width="12.500" height="12" fill="#fff"/><path d="M5 73.500 L17.500 61.500" stroke="#b5102c" stroke-width="1.600"/><rect x="150" y="61.500" width="12" height="6" fill="#fff"/><rect x="150" y="67.500" width="12" height="6" fill="#050505"/><rect x="5" y="61.500" width="157" height="12" fill="none" stroke="#444" stroke-width="1"/></svg>
<div class="t" style="left:862px;top:52.5px;font-size:8.500px;color:#222">C</div>
<div class="a" style="left:955px;top:51.0px;width:26.5px;height:13.6px;background:#fff;border:1px solid #bdbdbd"></div>
<div class="t" style="left:958.5px;top:52.5px;font-size:8px;color:#222">17.97</div>
<div class="t" style="left:983.5px;top:52.5px;font-size:8px;color:#222">%</div>
<div class="t" style="left:862px;top:66.85px;font-size:8.500px;color:#222">M</div>
<div class="a" style="left:955px;top:65.35px;width:26.5px;height:13.6px;background:#fff;border:1px solid #bdbdbd"></div>
<div class="t" style="left:958.5px;top:66.85px;font-size:8px;color:#222">71.09</div>
<div class="t" style="left:983.5px;top:66.85px;font-size:8px;color:#222">%</div>
<div class="t" style="left:862px;top:81.2px;font-size:8.500px;color:#222">Y</div>
<div class="a" style="left:955px;top:79.7px;width:26.5px;height:13.6px;background:#fff;border:1px solid #bdbdbd"></div>
<div class="t" style="left:958.5px;top:81.2px;font-size:8px;color:#222">56.25</div>
<div class="t" style="left:983.5px;top:81.2px;font-size:8px;color:#222">%</div>
<div class="t" style="left:862px;top:95.55px;font-size:8.500px;color:#222">K</div>
<div class="a" style="left:955px;top:94.05px;width:26.5px;height:13.6px;background:#fff;border:1px solid #bdbdbd"></div>
<div class="t" style="left:958.5px;top:95.55px;font-size:8px;color:#222">0</div>
<div class="t" style="left:983.5px;top:95.55px;font-size:8px;color:#222">%</div>
<div class="a" style="left:827px;top:127.5px;width:168.5px;height:1px;background:#b8b8b8;"></div>
<div class="a" style="left:827px;top:128.5px;width:168.5px;height:2px;background:#5a5a5a;"></div>
<div class="a" style="left:827px;top:130.5px;width:168.5px;height:14.5px;background:linear-gradient(#8c8c8c,#9a9a9a);"></div>
<div class="a" style="left:827px;top:131px;width:28px;height:14px;background:#9b9b9b;border-right:1px solid #727272;border-top:1px solid #858585"></div>
<div class="a" style="left:855px;top:131px;width:29.5px;height:14px;background:#9b9b9b;border-right:1px solid #727272;border-top:1px solid #858585"></div>
<div class="a" style="left:884.5px;top:131px;width:22.5px;height:14px;background:#9b9b9b;border-right:1px solid #727272;border-top:1px solid #858585"></div>
<div class="a" style="left:907px;top:131px;width:29.5px;height:14px;background:#9b9b9b;border-right:1px solid #727272;border-top:1px solid #858585"></div>
<div class="a" style="left:936.5px;top:130.5px;width:27.5px;height:15px;background:#dedede;"></div>
<div class="t" style="left:831.5px;top:133.3px;color:#222;font-size:10px">渐变</div>
<div class="t" style="left:857px;top:133.300px;width:26.500px;overflow:hidden;color:#222;font-size:10px">路径查找器</div>
<div class="t" style="left:887px;top:133.3px;color:#222;font-size:10px">属性</div>
<div class="t" style="left:910px;top:133.300px;width:26px;overflow:hidden;color:#222;font-size:10px">颜色参考</div>
<div class="t" style="left:940.5px;top:133.3px;color:#111;font-size:10px">图层</div>
<svg style="left:981px;top:134.5px" width="12" height="7"><path d="M0 2 H3 L1.500 4 Z" fill="#333"/><path d="M4.500 0.800 H11.500 M4.500 3.200 H11.500 M4.500 5.600 H11.500" stroke="#777" stroke-width="1.200"/></svg>
<div class="a" style="left:827.5px;top:145.5px;width:35px;height:343px;background:#d9d9d9;"></div>
<div class="a" style="left:862.5px;top:145.5px;width:1px;height:343px;background:#b5b5b5;"></div>
<div class="a" style="left:863.5px;top:145.5px;width:117.5px;height:343px;background:#fff;"></div>
<div class="a" style="left:981px;top:145.5px;width:14.5px;height:343px;background:#f0f0f0;"></div>
<div class="a" style="left:830.5px;top:147.39999999999998px;width:11px;height:13.3px;background:#e9e9e9;border:1px solid #cfcfcf"></div>
<div class="a" style="left:843.5px;top:147.39999999999998px;width:10.5px;height:13.3px;background:#e4e4e4;border:1px solid #cfcfcf"></div>
<div class="a" style="left:856.7px;top:147.2px;width:3.2px;height:14px;background:#4a72e2;"></div>
<div class="a" style="left:828px;top:161.39999999999998px;width:34.5px;height:1px;background:#bcbcbc;"></div>
<div class="a" style="left:863.5px;top:161.39999999999998px;width:117.5px;height:1px;background:#dcdcdc;"></div>
<svg style="left:889px;top:147.8px" width="13" height="12.5" viewBox="0 0 13 12.5"><rect x="0.500" y="0.500" width="12" height="11.500" fill="#fdf6ea" stroke="#555" stroke-width="1"/><path d="M1.500 9.500 C2 4 6 2 9 3 L11.500 5 L11.500 9.500 Z" fill="#f0a848"/></svg>
<div class="t" style="left:905.500px;top:149.1px;font-size:10px;color:#222;height:12.0px;overflow:hidden">&lt;路径&gt;</div>
<svg style="left:962.5px;top:150.7px" width="8" height="8"><circle cx="3.700" cy="3.700" r="3" fill="#fff" stroke="#666" stroke-width="1.300"/></svg>
<div class="a" style="left:830.5px;top:163.09999999999997px;width:11px;height:13.3px;background:#e9e9e9;border:1px solid #cfcfcf"></div>
<div class="a" style="left:843.5px;top:163.09999999999997px;width:10.5px;height:13.3px;background:#e4e4e4;border:1px solid #cfcfcf"></div>
<div class="a" style="left:856.7px;top:162.89999999999998px;width:3.2px;height:14px;background:#4a72e2;"></div>
<div class="a" style="left:828px;top:177.09999999999997px;width:34.5px;height:1px;background:#bcbcbc;"></div>
<div class="a" style="left:863.5px;top:177.09999999999997px;width:117.5px;height:1px;background:#dcdcdc;"></div>
<svg style="left:889px;top:163.5px" width="13" height="12.5" viewBox="0 0 13 12.5"><rect x="0.500" y="0.500" width="12" height="11.500" fill="#fdf6ea" stroke="#555" stroke-width="1"/><path d="M1.500 9 C2 5 5 2.500 8 3 C10 3.500 11 5 11.500 9 Z" fill="#f2ae4c"/></svg>
<div class="t" style="left:905.500px;top:164.8px;font-size:10px;color:#222;height:12.0px;overflow:hidden">&lt;路径&gt;</div>
<svg style="left:962.5px;top:166.39999999999998px" width="8" height="8"><circle cx="3.700" cy="3.700" r="3" fill="#fff" stroke="#666" stroke-width="1.300"/></svg>
<div class="a" style="left:830.5px;top:178.79999999999998px;width:11px;height:13.3px;background:#e9e9e9;border:1px solid #cfcfcf"></div>
<div class="a" style="left:843.5px;top:178.79999999999998px;width:10.5px;height:13.3px;background:#e4e4e4;border:1px solid #cfcfcf"></div>
<div class="a" style="left:856.7px;top:178.6px;width:3.2px;height:14px;background:#4a72e2;"></div>
<div class="a" style="left:828px;top:192.79999999999998px;width:34.5px;height:1px;background:#bcbcbc;"></div>
<div class="a" style="left:863.5px;top:192.79999999999998px;width:117.5px;height:1px;background:#dcdcdc;"></div>
<svg style="left:889px;top:179.2px" width="13" height="12.5" viewBox="0 0 13 12.5"><rect x="0.500" y="0.500" width="12" height="11.500" fill="#fdf6ea" stroke="#555" stroke-width="1"/><path d="M1.500 9.500 C2 5.500 5 3 7.500 3.500 C10 4 11 6 11.500 9.500 Z" fill="#f2b25a"/></svg>
<div class="t" style="left:905.500px;top:180.5px;font-size:10px;color:#222;height:12.0px;overflow:hidden">&lt;路径&gt;</div>
<svg style="left:962.5px;top:182.1px" width="8" height="8"><circle cx="3.700" cy="3.700" r="3" fill="#fff" stroke="#666" stroke-width="1.300"/></svg>
<div class="a" style="left:830.5px;top:194.49999999999997px;width:11px;height:13.3px;background:#e9e9e9;border:1px solid #cfcfcf"></div>
<div class="a" style="left:843.5px;top:194.49999999999997px;width:10.5px;height:13.3px;background:#e4e4e4;border:1px solid #cfcfcf"></div>
<div class="a" style="left:856.7px;top:194.29999999999998px;width:3.2px;height:14px;background:#4a72e2;"></div>
<svg style="left:831.2px;top:197.29999999999998px" width="10" height="8"><path d="M0.300 4.300 C2 1 7.500 0.500 9.700 3.600 C8 7 2.500 7.300 0.300 4.300 Z" fill="#6a6a6a"/><ellipse cx="5.400" cy="3.900" rx="2.800" ry="2.600" fill="#161616"/><path d="M0.800 3 C3 0.600 7 0.300 9.500 2.700" fill="none" stroke="#222" stroke-width="1.100"/><circle cx="4.300" cy="3" r="0.700" fill="#999"/></svg>
<div class="a" style="left:828px;top:208.49999999999997px;width:34.5px;height:1px;background:#bcbcbc;"></div>
<div class="a" style="left:863.5px;top:208.49999999999997px;width:117.5px;height:1px;background:#dcdcdc;"></div>
<svg style="left:889px;top:194.9px" width="13" height="12.5" viewBox="0 0 13 12.5"><rect x="0.500" y="0.500" width="12" height="11.500" fill="#f4f8f0" stroke="#555" stroke-width="1"/><ellipse cx="6.500" cy="6.500" rx="4.300" ry="4.800" fill="#9cc98f"/></svg>
<div class="t" style="left:905.500px;top:196.2px;font-size:10px;color:#222;height:12.0px;overflow:hidden">&lt;路径&gt;</div>
<svg style="left:962.5px;top:197.79999999999998px" width="8" height="8"><circle cx="3.700" cy="3.700" r="3" fill="#fff" stroke="#666" stroke-width="1.300"/></svg>
<div class="a" style="left:830.5px;top:210.2px;width:11px;height:13.3px;background:#e9e9e9;border:1px solid #cfcfcf"></div>
<div class="a" style="left:843.5px;top:210.2px;width:10.5px;height:13.3px;background:#e4e4e4;border:1px solid #cfcfcf"></div>
<div class="a" style="left:856.7px;top:210.0px;width:3.2px;height:14px;background:#4a72e2;"></div>
<svg style="left:831.2px;top:213.0px" width="10" height="8"><path d="M0.300 4.300 C2 1 7.500 0.500 9.700 3.600 C8 7 2.500 7.300 0.300 4.300 Z" fill="#6a6a6a"/><ellipse cx="5.400" cy="3.900" rx="2.800" ry="2.600" fill="#161616"/><path d="M0.800 3 C3 0.600 7 0.300 9.500 2.700" fill="none" stroke="#222" stroke-width="1.100"/><circle cx="4.300" cy="3" r="0.700" fill="#999"/></svg>
<div class="a" style="left:828px;top:224.2px;width:34.5px;height:1px;background:#bcbcbc;"></div>
<div class="a" style="left:863.5px;top:224.2px;width:117.5px;height:1px;background:#dcdcdc;"></div>
<svg style="left:889px;top:210.6px" width="13" height="12.5" viewBox="0 0 13 12.5"><rect x="0.500" y="0.500" width="12" height="11.500" fill="#f6f3ea" stroke="#555" stroke-width="1"/><path d="M1.200 9 C1.200 2 11.800 2 11.800 9 Z" fill="#453d38"/><rect x="1.200" y="9" width="10.600" height="2.300" fill="#efe8d4"/></svg>
<div class="t" style="left:905.500px;top:211.9px;font-size:10px;color:#222;height:12.0px;overflow:hidden">&lt;路径&gt;</div>
<svg style="left:962.5px;top:213.5px" width="8" height="8"><circle cx="3.700" cy="3.700" r="3" fill="#fff" stroke="#666" stroke-width="1.300"/></svg>
<div class="a" style="left:830.5px;top:225.89999999999998px;width:11px;height:13.3px;background:#e9e9e9;border:1px solid #cfcfcf"></div>
<div class="a" style="left:843.5px;top:225.89999999999998px;width:10.5px;height:13.3px;background:#e4e4e4;border:1px solid #cfcfcf"></div>
<div class="a" style="left:856.7px;top:225.7px;width:3.2px;height:14px;background:#4a72e2;"></div>
<svg style="left:831.2px;top:228.7px" width="10" height="8"><path d="M0.300 4.300 C2 1 7.500 0.500 9.700 3.600 C8 7 2.500 7.300 0.300 4.300 Z" fill="#6a6a6a"/><ellipse cx="5.400" cy="3.900" rx="2.800" ry="2.600" fill="#161616"/><path d="M0.800 3 C3 0.600 7 0.300 9.500 2.700" fill="none" stroke="#222" stroke-width="1.100"/><circle cx="4.300" cy="3" r="0.700" fill="#999"/></svg>
<div class="a" style="left:828px;top:239.89999999999998px;width:34.5px;height:1px;background:#bcbcbc;"></div>
<div class="a" style="left:863.5px;top:239.89999999999998px;width:117.5px;height:1px;background:#dcdcdc;"></div>
<svg style="left:889px;top:226.3px" width="13" height="12.5" viewBox="0 0 13 12.5"><rect x="0.500" y="0.500" width="12" height="11.500" fill="#eef5ea" stroke="#555" stroke-width="1"/><rect x="1.800" y="1.800" width="9.400" height="9" rx="3" fill="#9cc98f"/></svg>
<div class="t" style="left:905.500px;top:227.6px;font-size:10px;color:#222;height:12.0px;overflow:hidden">&lt;路径&gt;</div>
<svg style="left:962.5px;top:229.2px" width="8" height="8"><circle cx="3.700" cy="3.700" r="3" fill="#fff" stroke="#666" stroke-width="1.300"/></svg>
<div class="a" style="left:830.5px;top:241.59999999999997px;width:11px;height:13.3px;background:#e9e9e9;border:1px solid #cfcfcf"></div>
<div class="a" style="left:843.5px;top:241.59999999999997px;width:10.5px;height:13.3px;background:#e4e4e4;border:1px solid #cfcfcf"></div>
<div class="a" style="left:856.7px;top:241.39999999999998px;width:3.2px;height:14px;background:#4a72e2;"></div>
<svg style="left:831.2px;top:244.39999999999998px" width="10" height="8"><path d="M0.300 4.300 C2 1 7.500 0.500 9.700 3.600 C8 7 2.500 7.300 0.300 4.300 Z" fill="#6a6a6a"/><ellipse cx="5.400" cy="3.900" rx="2.800" ry="2.600" fill="#161616"/><path d="M0.800 3 C3 0.600 7 0.300 9.500 2.700" fill="none" stroke="#222" stroke-width="1.100"/><circle cx="4.300" cy="3" r="0.700" fill="#999"/></svg>
<div class="a" style="left:828px;top:255.59999999999997px;width:34.5px;height:1px;background:#bcbcbc;"></div>
<div class="a" style="left:863.5px;top:255.59999999999997px;width:117.5px;height:1px;background:#dcdcdc;"></div>
<svg style="left:889px;top:242.0px" width="13" height="12.5" viewBox="0 0 13 12.5"><rect x="0.500" y="0.500" width="12" height="11.500" fill="#f7f0e0" stroke="#555" stroke-width="1"/></svg>
<div class="t" style="left:905.500px;top:243.3px;font-size:10px;color:#222;height:12.0px;overflow:hidden">&lt;路径&gt;</div>
<svg style="left:962.5px;top:244.89999999999998px" width="8" height="8"><circle cx="3.700" cy="3.700" r="3" fill="#fff" stroke="#666" stroke-width="1.300"/></svg>
<div class="a" style="left:830.5px;top:257.29999999999995px;width:11px;height:13.3px;background:#e9e9e9;border:1px solid #cfcfcf"></div>
<div class="a" style="left:843.5px;top:257.29999999999995px;width:10.5px;height:13.3px;background:#e4e4e4;border:1px solid #cfcfcf"></div>
<div class="a" style="left:856.7px;top:257.09999999999997px;width:3.2px;height:14px;background:#4a72e2;"></div>
<svg style="left:831.2px;top:260.09999999999997px" width="10" height="8"><path d="M0.300 4.300 C2 1 7.500 0.500 9.700 3.600 C8 7 2.500 7.300 0.300 4.300 Z" fill="#6a6a6a"/><ellipse cx="5.400" cy="3.900" rx="2.800" ry="2.600" fill="#161616"/><path d="M0.800 3 C3 0.600 7 0.300 9.500 2.700" fill="none" stroke="#222" stroke-width="1.100"/><circle cx="4.300" cy="3" r="0.700" fill="#999"/></svg>
<div class="a" style="left:828px;top:271.29999999999995px;width:34.5px;height:1px;background:#bcbcbc;"></div>
<div class="a" style="left:863.5px;top:271.29999999999995px;width:117.5px;height:1px;background:#dcdcdc;"></div>
<svg style="left:889px;top:257.7px" width="13" height="12.5" viewBox="0 0 13 12.5"><rect x="0.500" y="0.500" width="12" height="11.500" fill="#e8e4dc" stroke="#555" stroke-width="1"/><circle cx="6.500" cy="6.300" r="5.200" fill="#4a433e"/></svg>
<div class="t" style="left:905.500px;top:259.0px;font-size:10px;color:#222;height:12.0px;overflow:hidden">&lt;路径&gt;</div>
<svg style="left:962.5px;top:260.59999999999997px" width="8" height="8"><circle cx="3.700" cy="3.700" r="3" fill="#fff" stroke="#666" stroke-width="1.300"/></svg>
<div class="a" style="left:830.5px;top:272.99999999999994px;width:11px;height:13.3px;background:#e9e9e9;border:1px solid #cfcfcf"></div>
<div class="a" style="left:843.5px;top:272.99999999999994px;width:10.5px;height:13.3px;background:#e4e4e4;border:1px solid #cfcfcf"></div>
<div class="a" style="left:856.7px;top:272.79999999999995px;width:3.2px;height:14px;background:#4a72e2;"></div>
<svg style="left:831.2px;top:275.79999999999995px" width="10" height="8"><path d="M0.300 4.300 C2 1 7.500 0.500 9.700 3.600 C8 7 2.500 7.300 0.300 4.300 Z" fill="#6a6a6a"/><ellipse cx="5.400" cy="3.900" rx="2.800" ry="2.600" fill="#161616"/><path d="M0.800 3 C3 0.600 7 0.300 9.500 2.700" fill="none" stroke="#222" stroke-width="1.100"/><circle cx="4.300" cy="3" r="0.700" fill="#999"/></svg>
<div class="a" style="left:828px;top:286.99999999999994px;width:34.5px;height:1px;background:#bcbcbc;"></div>
<div class="a" style="left:863.5px;top:286.99999999999994px;width:117.5px;height:1px;background:#dcdcdc;"></div>
<svg style="left:889px;top:273.4px" width="13" height="12.5" viewBox="0 0 13 12.5"><rect x="0.500" y="0.500" width="12" height="11.500" fill="#f7f0e0" stroke="#555" stroke-width="1"/></svg>
<div class="t" style="left:905.500px;top:274.7px;font-size:10px;color:#222;height:12.0px;overflow:hidden">&lt;路径&gt;</div>
<svg style="left:962.5px;top:276.29999999999995px" width="8" height="8"><circle cx="3.700" cy="3.700" r="3" fill="#fff" stroke="#666" stroke-width="1.300"/></svg>
<div class="a" style="left:830.5px;top:288.7px;width:11px;height:13.3px;background:#e9e9e9;border:1px solid #cfcfcf"></div>
<div class="a" style="left:843.5px;top:288.7px;width:10.5px;height:13.3px;background:#e4e4e4;border:1px solid #cfcfcf"></div>
<div class="a" style="left:856.7px;top:288.5px;width:3.2px;height:14px;background:#4a72e2;"></div>
<svg style="left:831.2px;top:291.5px" width="10" height="8"><path d="M0.300 4.300 C2 1 7.500 0.500 9.700 3.600 C8 7 2.500 7.300 0.300 4.300 Z" fill="#6a6a6a"/><ellipse cx="5.400" cy="3.900" rx="2.800" ry="2.600" fill="#161616"/><path d="M0.800 3 C3 0.600 7 0.300 9.500 2.700" fill="none" stroke="#222" stroke-width="1.100"/><circle cx="4.300" cy="3" r="0.700" fill="#999"/></svg>
<div class="a" style="left:828px;top:302.7px;width:34.5px;height:1px;background:#bcbcbc;"></div>
<div class="a" style="left:863.5px;top:302.7px;width:117.5px;height:1px;background:#dcdcdc;"></div>
<svg style="left:889px;top:289.1px" width="13" height="12.5" viewBox="0 0 13 12.5"><rect x="0.500" y="0.500" width="12" height="11.500" fill="#fff" stroke="#555" stroke-width="1"/></svg>
<div class="t" style="left:905.500px;top:290.4px;font-size:10px;color:#222;height:12.0px;overflow:hidden">&lt;路径&gt;</div>
<svg style="left:962.5px;top:292.0px" width="8" height="8"><circle cx="3.700" cy="3.700" r="3" fill="#fff" stroke="#666" stroke-width="1.300"/></svg>
<div class="a" style="left:830.5px;top:304.4px;width:11px;height:13.3px;background:#e9e9e9;border:1px solid #cfcfcf"></div>
<div class="a" style="left:843.5px;top:304.4px;width:10.5px;height:13.3px;background:#e4e4e4;border:1px solid #cfcfcf"></div>
<div class="a" style="left:856.7px;top:304.2px;width:3.2px;height:14px;background:#4a72e2;"></div>
<svg style="left:831.2px;top:307.2px" width="10" height="8"><path d="M0.300 4.300 C2 1 7.500 0.500 9.700 3.600 C8 7 2.500 7.300 0.300 4.300 Z" fill="#6a6a6a"/><ellipse cx="5.400" cy="3.900" rx="2.800" ry="2.600" fill="#161616"/><path d="M0.800 3 C3 0.600 7 0.300 9.500 2.700" fill="none" stroke="#222" stroke-width="1.100"/><circle cx="4.300" cy="3" r="0.700" fill="#999"/></svg>
<div class="a" style="left:828px;top:318.4px;width:34.5px;height:1px;background:#bcbcbc;"></div>
<div class="a" style="left:863.5px;top:318.4px;width:117.5px;height:1px;background:#dcdcdc;"></div>
<svg style="left:889px;top:304.8px" width="13" height="12.5" viewBox="0 0 13 12.5"><rect x="0.500" y="0.500" width="12" height="11.500" fill="#eef5ea" stroke="#555" stroke-width="1"/><rect x="1.800" y="1.800" width="9.400" height="9" rx="3" fill="#9cc98f"/></svg>
<div class="t" style="left:905.500px;top:306.1px;font-size:10px;color:#222;height:12.0px;overflow:hidden">&lt;路径&gt;</div>
<svg style="left:962.5px;top:307.7px" width="8" height="8"><circle cx="3.700" cy="3.700" r="3" fill="#fff" stroke="#666" stroke-width="1.300"/></svg>
<div class="a" style="left:830.5px;top:320.09999999999997px;width:11px;height:13.3px;background:#e9e9e9;border:1px solid #cfcfcf"></div>
<div class="a" style="left:843.5px;top:320.09999999999997px;width:10.5px;height:13.3px;background:#e4e4e4;border:1px solid #cfcfcf"></div>
<div class="a" style="left:856.7px;top:319.9px;width:3.2px;height:14px;background:#4a72e2;"></div>
<svg style="left:831.2px;top:322.9px" width="10" height="8"><path d="M0.300 4.300 C2 1 7.500 0.500 9.700 3.600 C8 7 2.500 7.300 0.300 4.300 Z" fill="#6a6a6a"/><ellipse cx="5.400" cy="3.900" rx="2.800" ry="2.600" fill="#161616"/><path d="M0.800 3 C3 0.600 7 0.300 9.500 2.700" fill="none" stroke="#222" stroke-width="1.100"/><circle cx="4.300" cy="3" r="0.700" fill="#999"/></svg>
<div class="a" style="left:828px;top:334.09999999999997px;width:34.5px;height:1px;background:#bcbcbc;"></div>
<div class="a" style="left:863.5px;top:334.09999999999997px;width:117.5px;height:1px;background:#dcdcdc;"></div>
<svg style="left:889px;top:320.5px" width="13" height="12.5" viewBox="0 0 13 12.5"><rect x="0.500" y="0.500" width="12" height="11.500" fill="#fff" stroke="#555" stroke-width="1"/></svg>
<div class="t" style="left:905.500px;top:321.8px;font-size:10px;color:#222;height:12.0px;overflow:hidden">&lt;路径&gt;</div>
<svg style="left:962.5px;top:323.4px" width="8" height="8"><circle cx="3.700" cy="3.700" r="3" fill="#fff" stroke="#666" stroke-width="1.300"/></svg>
<div class="a" style="left:830.5px;top:335.79999999999995px;width:11px;height:13.3px;background:#e9e9e9;border:1px solid #cfcfcf"></div>
<div class="a" style="left:843.5px;top:335.79999999999995px;width:10.5px;height:13.3px;background:#e4e4e4;border:1px solid #cfcfcf"></div>
<div class="a" style="left:856.7px;top:335.59999999999997px;width:3.2px;height:14px;background:#4a72e2;"></div>
<svg style="left:831.2px;top:338.59999999999997px" width="10" height="8"><path d="M0.300 4.300 C2 1 7.500 0.500 9.700 3.600 C8 7 2.500 7.300 0.300 4.300 Z" fill="#6a6a6a"/><ellipse cx="5.400" cy="3.900" rx="2.800" ry="2.600" fill="#161616"/><path d="M0.800 3 C3 0.600 7 0.300 9.500 2.700" fill="none" stroke="#222" stroke-width="1.100"/><circle cx="4.300" cy="3" r="0.700" fill="#999"/></svg>
<div class="a" style="left:828px;top:349.79999999999995px;width:34.5px;height:1px;background:#bcbcbc;"></div>
<div class="a" style="left:863.5px;top:349.79999999999995px;width:117.5px;height:1px;background:#dcdcdc;"></div>
<svg style="left:889px;top:336.2px" width="13" height="12.5" viewBox="0 0 13 12.5"><rect x="0.500" y="0.500" width="12" height="11.500" fill="#f7f6ea" stroke="#555" stroke-width="1"/><circle cx="6.500" cy="6.300" r="3" fill="#eeecd4"/></svg>
<div class="t" style="left:905.500px;top:337.5px;font-size:10px;color:#222;height:12.0px;overflow:hidden">&lt;路径&gt;</div>
<svg style="left:962.5px;top:339.09999999999997px" width="8" height="8"><circle cx="3.700" cy="3.700" r="3" fill="#fff" stroke="#666" stroke-width="1.300"/></svg>
<div class="a" style="left:830.5px;top:351.49999999999994px;width:11px;height:13.3px;background:#e9e9e9;border:1px solid #cfcfcf"></div>
<div class="a" style="left:843.5px;top:351.49999999999994px;width:10.5px;height:13.3px;background:#e4e4e4;border:1px solid #cfcfcf"></div>
<div class="a" style="left:856.7px;top:351.29999999999995px;width:3.2px;height:14px;background:#4a72e2;"></div>
<svg style="left:831.2px;top:354.29999999999995px" width="10" height="8"><path d="M0.300 4.300 C2 1 7.500 0.500 9.700 3.600 C8 7 2.500 7.300 0.300 4.300 Z" fill="#6a6a6a"/><ellipse cx="5.400" cy="3.900" rx="2.800" ry="2.600" fill="#161616"/><path d="M0.800 3 C3 0.600 7 0.300 9.500 2.700" fill="none" stroke="#222" stroke-width="1.100"/><circle cx="4.300" cy="3" r="0.700" fill="#999"/></svg>
<div class="a" style="left:828px;top:365.49999999999994px;width:34.5px;height:1px;background:#bcbcbc;"></div>
<div class="a" style="left:863.5px;top:365.49999999999994px;width:117.5px;height:1px;background:#dcdcdc;"></div>
<svg style="left:889px;top:351.9px" width="13" height="12.5" viewBox="0 0 13 12.5"><rect x="0.500" y="0.500" width="12" height="11.500" fill="#f7f6ea" stroke="#555" stroke-width="1"/><circle cx="6.500" cy="6.300" r="3" fill="#eeecd4"/></svg>
<div class="t" style="left:905.500px;top:353.2px;font-size:10px;color:#222;height:12.0px;overflow:hidden">&lt;路径&gt;</div>
<svg style="left:962.5px;top:354.79999999999995px" width="8" height="8"><circle cx="3.700" cy="3.700" r="3" fill="#fff" stroke="#666" stroke-width="1.300"/></svg>
<div class="a" style="left:830.5px;top:367.2px;width:11px;height:13.3px;background:#e9e9e9;border:1px solid #cfcfcf"></div>
<div class="a" style="left:843.5px;top:367.2px;width:10.5px;height:13.3px;background:#e4e4e4;border:1px solid #cfcfcf"></div>
<div class="a" style="left:856.7px;top:367.0px;width:3.2px;height:14px;background:#4a72e2;"></div>
<svg style="left:831.2px;top:370.0px" width="10" height="8"><path d="M0.300 4.300 C2 1 7.500 0.500 9.700 3.600 C8 7 2.500 7.300 0.300 4.300 Z" fill="#6a6a6a"/><ellipse cx="5.400" cy="3.900" rx="2.800" ry="2.600" fill="#161616"/><path d="M0.800 3 C3 0.600 7 0.300 9.500 2.700" fill="none" stroke="#222" stroke-width="1.100"/><circle cx="4.300" cy="3" r="0.700" fill="#999"/></svg>
<div class="a" style="left:828px;top:381.2px;width:34.5px;height:1px;background:#bcbcbc;"></div>
<div class="a" style="left:863.5px;top:381.2px;width:117.5px;height:1px;background:#dcdcdc;"></div>
<svg style="left:889px;top:367.6px" width="13" height="12.5" viewBox="0 0 13 12.5"><rect x="0.500" y="0.500" width="12" height="11.500" fill="#f7f6ea" stroke="#555" stroke-width="1"/><circle cx="6.500" cy="6.300" r="3" fill="#eeecd4"/></svg>
<div class="t" style="left:905.500px;top:368.9px;font-size:10px;color:#222;height:12.0px;overflow:hidden">&lt;路径&gt;</div>
<svg style="left:962.5px;top:370.5px" width="8" height="8"><circle cx="3.700" cy="3.700" r="3" fill="#fff" stroke="#666" stroke-width="1.300"/></svg>
<div class="a" style="left:830.5px;top:382.9px;width:11px;height:13.3px;background:#e9e9e9;border:1px solid #cfcfcf"></div>
<div class="a" style="left:843.5px;top:382.9px;width:10.5px;height:13.3px;background:#e4e4e4;border:1px solid #cfcfcf"></div>
<div class="a" style="left:856.7px;top:382.7px;width:3.2px;height:14px;background:#4a72e2;"></div>
<svg style="left:831.2px;top:385.7px" width="10" height="8"><path d="M0.300 4.300 C2 1 7.500 0.500 9.700 3.600 C8 7 2.500 7.300 0.300 4.300 Z" fill="#6a6a6a"/><ellipse cx="5.400" cy="3.900" rx="2.800" ry="2.600" fill="#161616"/><path d="M0.800 3 C3 0.600 7 0.300 9.500 2.700" fill="none" stroke="#222" stroke-width="1.100"/><circle cx="4.300" cy="3" r="0.700" fill="#999"/></svg>
<div class="a" style="left:828px;top:396.9px;width:34.5px;height:1px;background:#bcbcbc;"></div>
<div class="a" style="left:863.5px;top:396.9px;width:117.5px;height:1px;background:#dcdcdc;"></div>
<svg style="left:889px;top:383.3px" width="13" height="12.5" viewBox="0 0 13 12.5"><rect x="0.500" y="0.500" width="12" height="11.500" fill="#f7f6ea" stroke="#555" stroke-width="1"/><circle cx="6.500" cy="6.300" r="3" fill="#eeecd4"/></svg>
<div class="t" style="left:905.500px;top:384.6px;font-size:10px;color:#222;height:12.0px;overflow:hidden">&lt;路径&gt;</div>
<svg style="left:962.5px;top:386.2px" width="8" height="8"><circle cx="3.700" cy="3.700" r="3" fill="#fff" stroke="#666" stroke-width="1.300"/></svg>
<div class="a" style="left:830.5px;top:398.59999999999997px;width:11px;height:13.3px;background:#e9e9e9;border:1px solid #cfcfcf"></div>
<div class="a" style="left:843.5px;top:398.59999999999997px;width:10.5px;height:13.3px;background:#e4e4e4;border:1px solid #cfcfcf"></div>
<div class="a" style="left:856.7px;top:398.4px;width:3.2px;height:14px;background:#4a72e2;"></div>
<svg style="left:831.2px;top:401.4px" width="10" height="8"><path d="M0.300 4.300 C2 1 7.500 0.500 9.700 3.600 C8 7 2.500 7.300 0.300 4.300 Z" fill="#6a6a6a"/><ellipse cx="5.400" cy="3.900" rx="2.800" ry="2.600" fill="#161616"/><path d="M0.800 3 C3 0.600 7 0.300 9.500 2.700" fill="none" stroke="#222" stroke-width="1.100"/><circle cx="4.300" cy="3" r="0.700" fill="#999"/></svg>
<div class="a" style="left:828px;top:412.59999999999997px;width:34.5px;height:1px;background:#bcbcbc;"></div>
<div class="a" style="left:863.5px;top:412.59999999999997px;width:117.5px;height:1px;background:#dcdcdc;"></div>
<svg style="left:889px;top:399.0px" width="13" height="12.5" viewBox="0 0 13 12.5"><rect x="0.500" y="0.500" width="12" height="11.500" fill="#f7f6ea" stroke="#555" stroke-width="1"/><circle cx="6.500" cy="6.300" r="3" fill="#eeecd4"/></svg>
<div class="t" style="left:905.500px;top:400.3px;font-size:10px;color:#222;height:12.0px;overflow:hidden">&lt;路径&gt;</div>
<svg style="left:962.5px;top:401.9px" width="8" height="8"><circle cx="3.700" cy="3.700" r="3" fill="#fff" stroke="#666" stroke-width="1.300"/></svg>
<div class="a" style="left:830.5px;top:414.29999999999995px;width:11px;height:13.3px;background:#e9e9e9;border:1px solid #cfcfcf"></div>
<div class="a" style="left:843.5px;top:414.29999999999995px;width:10.5px;height:13.3px;background:#e4e4e4;border:1px solid #cfcfcf"></div>
<div class="a" style="left:856.7px;top:414.09999999999997px;width:3.2px;height:14px;background:#4a72e2;"></div>
<svg style="left:831.2px;top:417.09999999999997px" width="10" height="8"><path d="M0.300 4.300 C2 1 7.500 0.500 9.700 3.600 C8 7 2.500 7.300 0.300 4.300 Z" fill="#6a6a6a"/><ellipse cx="5.400" cy="3.900" rx="2.800" ry="2.600" fill="#161616"/><path d="M0.800 3 C3 0.600 7 0.300 9.500 2.700" fill="none" stroke="#222" stroke-width="1.100"/><circle cx="4.300" cy="3" r="0.700" fill="#999"/></svg>
<div class="a" style="left:828px;top:428.29999999999995px;width:34.5px;height:1px;background:#bcbcbc;"></div>
<div class="a" style="left:863.5px;top:428.29999999999995px;width:117.5px;height:1px;background:#dcdcdc;"></div>
<svg style="left:889px;top:414.7px" width="13" height="12.5" viewBox="0 0 13 12.5"><rect x="0.800" y="0.800" width="11.400" height="10.900" fill="#fff" stroke="#111" stroke-width="1.600"/></svg>
<div class="t" style="left:905.500px;top:416.0px;font-size:10px;color:#222;height:12.0px;overflow:hidden">&lt;路径&gt;</div>
<svg style="left:962.5px;top:417.59999999999997px" width="8" height="8"><circle cx="3.700" cy="3.700" r="3" fill="#fff" stroke="#666" stroke-width="1.300"/></svg>
<div class="a" style="left:830.5px;top:429.99999999999994px;width:11px;height:13.3px;background:#e9e9e9;border:1px solid #cfcfcf"></div>
<div class="a" style="left:843.5px;top:429.99999999999994px;width:10.5px;height:13.3px;background:#e4e4e4;border:1px solid #cfcfcf"></div>
<div class="a" style="left:856.7px;top:429.79999999999995px;width:3.2px;height:14px;background:#4a72e2;"></div>
<svg style="left:831.2px;top:432.79999999999995px" width="10" height="8"><path d="M0.300 4.300 C2 1 7.500 0.500 9.700 3.600 C8 7 2.500 7.300 0.300 4.300 Z" fill="#6a6a6a"/><ellipse cx="5.400" cy="3.900" rx="2.800" ry="2.600" fill="#161616"/><path d="M0.800 3 C3 0.600 7 0.300 9.500 2.700" fill="none" stroke="#222" stroke-width="1.100"/><circle cx="4.300" cy="3" r="0.700" fill="#999"/></svg>
<div class="a" style="left:828px;top:443.99999999999994px;width:34.5px;height:1px;background:#bcbcbc;"></div>
<div class="a" style="left:863.5px;top:443.99999999999994px;width:117.5px;height:1px;background:#dcdcdc;"></div>
<svg style="left:889px;top:430.4px" width="13" height="12.5" viewBox="0 0 13 12.5"><rect x="0.500" y="0.500" width="12" height="11.500" fill="#fff" stroke="#555" stroke-width="1"/><path d="M7 1.200 L2.300 10.800 L10 10.500 Z" fill="#d9504a"/></svg>
<div class="t" style="left:905.500px;top:431.7px;font-size:10px;color:#222;height:12.0px;overflow:hidden">&lt;路径&gt;</div>
<svg style="left:961.5px;top:431.79999999999995px" width="11" height="10"><circle cx="5" cy="5" r="4.300" fill="#d8d8d8" stroke="#777" stroke-width="0.900"/><circle cx="5" cy="5" r="2.200" fill="#fff" stroke="#666" stroke-width="0.900"/></svg>
<div class="a" style="left:972.5px;top:433.29999999999995px;width:6px;height:6.5px;background:#4a76e6;border:1px solid #2a3f9a"></div>
<div class="a" style="left:830.5px;top:445.7px;width:11px;height:13.3px;background:#e9e9e9;border:1px solid #cfcfcf"></div>
<div class="a" style="left:843.5px;top:445.7px;width:10.5px;height:13.3px;background:#e4e4e4;border:1px solid #cfcfcf"></div>
<div class="a" style="left:856.7px;top:445.5px;width:3.2px;height:14px;background:#4a72e2;"></div>
<svg style="left:831.2px;top:448.5px" width="10" height="8"><path d="M0.300 4.300 C2 1 7.500 0.500 9.700 3.600 C8 7 2.500 7.300 0.300 4.300 Z" fill="#6a6a6a"/><ellipse cx="5.400" cy="3.900" rx="2.800" ry="2.600" fill="#161616"/><path d="M0.800 3 C3 0.600 7 0.300 9.500 2.700" fill="none" stroke="#222" stroke-width="1.100"/><circle cx="4.300" cy="3" r="0.700" fill="#999"/></svg>
<div class="a" style="left:828px;top:459.7px;width:34.5px;height:1px;background:#bcbcbc;"></div>
<div class="a" style="left:863.5px;top:459.7px;width:117.5px;height:1px;background:#dcdcdc;"></div>
<svg style="left:889px;top:446.1px" width="13" height="12.5" viewBox="0 0 13 12.5"><rect x="0.500" y="0.500" width="12" height="11.500" fill="#fff" stroke="#555" stroke-width="1" stroke-dasharray="3 1.500"/></svg>
<div class="t" style="left:905.500px;top:447.4px;font-size:10px;color:#222;height:12.0px;overflow:hidden">&lt;路径&gt;</div>
<svg style="left:962.5px;top:449.0px" width="8" height="8"><circle cx="3.700" cy="3.700" r="3" fill="#fff" stroke="#666" stroke-width="1.300"/></svg>
<div class="a" style="left:830.5px;top:461.4px;width:11px;height:13.3px;background:#e9e9e9;border:1px solid #cfcfcf"></div>
<div class="a" style="left:843.5px;top:461.4px;width:10.5px;height:13.3px;background:#e4e4e4;border:1px solid #cfcfcf"></div>
<div class="a" style="left:856.7px;top:461.2px;width:3.2px;height:14px;background:#4a72e2;"></div>
<svg style="left:831.2px;top:464.2px" width="10" height="8"><path d="M0.300 4.300 C2 1 7.500 0.500 9.700 3.600 C8 7 2.500 7.300 0.300 4.300 Z" fill="#6a6a6a"/><ellipse cx="5.400" cy="3.900" rx="2.800" ry="2.600" fill="#161616"/><path d="M0.800 3 C3 0.600 7 0.300 9.500 2.700" fill="none" stroke="#222" stroke-width="1.100"/><circle cx="4.300" cy="3" r="0.700" fill="#999"/></svg>
<div class="a" style="left:828px;top:475.4px;width:34.5px;height:1px;background:#bcbcbc;"></div>
<div class="a" style="left:863.5px;top:475.4px;width:117.5px;height:1px;background:#dcdcdc;"></div>
<svg style="left:889px;top:461.8px" width="13" height="12.5" viewBox="0 0 13 12.5"><rect x="0.500" y="0.500" width="12" height="11.500" fill="#fff" stroke="#555" stroke-width="1"/></svg>
<div class="t" style="left:905.500px;top:463.1px;font-size:10px;color:#222;height:12.0px;overflow:hidden">&lt;路径&gt;</div>
<svg style="left:962.5px;top:464.7px" width="8" height="8"><circle cx="3.700" cy="3.700" r="3" fill="#fff" stroke="#666" stroke-width="1.300"/></svg>
<div class="a" style="left:830.5px;top:477.09999999999997px;width:11px;height:11.600000000000023px;background:#e9e9e9;border:1px solid #cfcfcf"></div>
<div class="a" style="left:843.5px;top:477.09999999999997px;width:10.5px;height:11.600000000000023px;background:#e4e4e4;border:1px solid #cfcfcf"></div>
<div class="a" style="left:856.7px;top:476.9px;width:3.2px;height:11.600000000000023px;background:#4a72e2;"></div>
<svg style="left:831.2px;top:479.9px" width="10" height="8"><path d="M0.300 4.300 C2 1 7.500 0.500 9.700 3.600 C8 7 2.500 7.300 0.300 4.300 Z" fill="#6a6a6a"/><ellipse cx="5.400" cy="3.900" rx="2.800" ry="2.600" fill="#161616"/><path d="M0.800 3 C3 0.600 7 0.300 9.500 2.700" fill="none" stroke="#222" stroke-width="1.100"/><circle cx="4.300" cy="3" r="0.700" fill="#999"/></svg>
<svg style="left:889px;top:477.5px" width="13" height="11.100000000000023" viewBox="0 0 13 11.100000000000023"><rect x="0.500" y="0.500" width="12" height="11.500" fill="#fff" stroke="#555" stroke-width="1"/></svg>
<div class="t" style="left:905.500px;top:478.8px;font-size:10px;color:#222;height:10.6px;overflow:hidden">&lt;编组&gt;</div>
<svg style="left:962.5px;top:479.9px" width="8" height="8"><defs><radialGradient id="tg" cx="0.350" cy="0.350" r="0.700"><stop offset="0" stop-color="#fff"/><stop offset="1" stop-color="#444"/></radialGradient></defs><circle cx="3.500" cy="3.500" r="3.200" fill="url(#tg)"/></svg>
<svg style="left:880px;top:479.9px" width="6" height="7"><path d="M0.500 0.500 L4.500 3.500 L0.500 6.500 Z" fill="none" stroke="#666" stroke-width="0.900"/></svg>
<svg style="left:984px;top:151.5px" width="8" height="6"><path d="M0.500 4.500 L4 1 L7.500 4.500" fill="none" stroke="#444" stroke-width="1.500"/></svg>
<svg style="left:984px;top:478px" width="8" height="6"><path d="M0.500 1 L4 4.500 L7.500 1" fill="none" stroke="#444" stroke-width="1.500"/></svg>
<div class="a" style="left:982px;top:439px;width:10.5px;height:12.5px;background:#cdcdcd;"></div>
<div class="a" style="left:827.5px;top:488px;width:168px;height:13.5px;background:#d4d4d4;border-top:1px solid #2a2a2a"></div>
<div class="a" style="left:981px;top:488px;width:14.5px;height:1px;background:#d4d4d4;"></div>
<div class="t" style="left:835.5px;top:489.6px;font-size:9.500px;color:#222">1 个图层</div>
<svg style="left:891.5px;top:491.5px" width="10" height="8"><circle cx="5" cy="4" r="3" fill="#e8e8e8" stroke="#333" stroke-width="1.100"/><circle cx="5" cy="4" r="1.300" fill="#222"/><path d="M0.500 4 H2" stroke="#333" stroke-width="1"/></svg>
<svg style="left:914px;top:491.5px" width="12" height="8"><path d="M0 3.500 H4 M2.700 2.200 L4 3.500 L2.700 4.800" fill="none" stroke="#222" stroke-width="1.100"/><rect x="5.500" y="1" width="5" height="5.800" fill="#f2f2f2" stroke="#333" stroke-width="1"/><path d="M6.500 7.300 H11 V2" fill="none" stroke="#222" stroke-width="1"/></svg>
<svg style="left:941px;top:491.5px" width="10" height="8"><rect x="0.800" y="0.800" width="6" height="5.800" fill="#f2f2f2" stroke="#333" stroke-width="1"/><path d="M2 7.300 H7.500 V2" fill="none" stroke="#222" stroke-width="1.100"/></svg>
<svg style="left:965.5px;top:490.8px" width="8" height="9"><path d="M1.500 2.800 H6.500 L6 8.300 H2 Z" fill="#e4e4e4" stroke="#8a8a8a" stroke-width="0.900"/><path d="M1 2.300 H7 M3 1 H5" stroke="#8a8a8a" stroke-width="1"/></svg>
<div class="a" style="left:826px;top:501.5px;width:174px;height:1px;background:#dedede;"></div>
<div class="a" style="left:826px;top:502.5px;width:174px;height:1.2px;background:#959595;"></div>
<div class="a" style="left:826px;top:503.7px;width:174px;height:3.3px;background:#bababa;"></div>
<div class="a" style="left:46px;top:489px;width:780px;height:12.5px;background:#efefef;border-top:1px solid #c4c4c4"></div>
<div class="a" style="left:46px;top:489.5px;width:135px;height:12px;background:#dcdcdc;"></div>
<div class="a" style="left:47px;top:490px;width:45.5px;height:11.5px;background:#fff;border:1px solid #b8b8b8"></div>
<div class="t" style="left:49px;top:491px;font-size:8px;color:#222">64%</div>
<svg style="left:84.5px;top:494.5px" width="6" height="4"><path d="M0.300 0.300 L3 3 L5.700 0.300" fill="none" stroke="#444" stroke-width="1"/></svg>
<svg style="left:96px;top:492.5px" width="7" height="6"><path d="M1 0 V6" stroke="#8a8a8a" stroke-width="1.200"/><path d="M6 0 L2.500 3 L6 6 Z" fill="#8a8a8a"/></svg>
<svg style="left:110px;top:492.5px" width="5" height="6"><path d="M4.500 0 L1 3 L4.500 6 Z" fill="#8a8a8a"/></svg>
<div class="a" style="left:119px;top:490px;width:34.5px;height:11.5px;background:#fff;border:1px solid #b8b8b8"></div>
<div class="t" style="left:122px;top:491px;font-size:8px;color:#222">1</div>
<svg style="left:144.5px;top:494.5px" width="6" height="4"><path d="M0.300 0.300 L3 3 L5.700 0.300" fill="none" stroke="#444" stroke-width="1"/></svg>
<svg style="left:158px;top:492.5px" width="5" height="6"><path d="M0.500 0 L4 3 L0.500 6 Z" fill="#777"/></svg>
<svg style="left:168.5px;top:492.5px" width="7" height="6"><path d="M6 0 V6" stroke="#8a8a8a" stroke-width="1.200"/><path d="M1 0 L4.500 3 L1 6 Z" fill="#8a8a8a"/></svg>
<div class="a" style="left:180.5px;top:489.5px;width:139px;height:12px;background:#d4d4d4;border-left:1px solid #bdbdbd;border-right:1px solid #bdbdbd"></div>
<div class="t" style="left:209px;top:491.3px;font-size:10px;color:#1a1a1a;letter-spacing:-0.300px">35 次还原：无重做</div>
<svg style="left:310.5px;top:491.5px" width="5" height="8"><path d="M0.500 0.500 L4.500 4 L0.500 7.500 Z" fill="#111"/></svg>
<svg style="left:324.5px;top:492px" width="5" height="7"><path d="M4 0.500 L1 3.500 L4 6.500" fill="none" stroke="#333" stroke-width="1.200"/></svg>
<div class="a" style="left:577.5px;top:490px;width:13.5px;height:10.5px;background:#c6c6c6;"></div>
<div class="a" style="left:815px;top:489px;width:11px;height:13.5px;background:#f1f1f1;"></div>
<div class="a" style="left:0px;top:501.5px;width:826px;height:1px;background:#dedede;"></div>
<div class="a" style="left:0px;top:502.5px;width:826px;height:1.2px;background:#959595;"></div>
<div class="a" style="left:0px;top:503.7px;width:826px;height:3.3px;background:#bababa;"></div>
<div class="a" style="left:686px;top:485px;width:127px;height:18px;background:#fafafa;border:1px solid #dcdcdc;border-radius:2px"></div>
<svg style="left:683px;top:480px" width="28" height="26"><g transform="rotate(-14 13 13.300)"><rect x="3.500" y="4.300" width="19" height="18" rx="2.600" fill="#3cae31"/><path d="M18.300 9.300 C15.500 7.300 8.300 7.600 8.300 10.800 C8.300 14.300 18.300 12.300 18.300 15.900 C18.300 19.200 10.500 19.200 7.600 17.300" fill="none" stroke="#fff" stroke-width="2.500" stroke-linecap="round"/></g></svg>
<div class="t" style="left:711px;top:488.5px;font-size:12.500px;font-weight:bold;color:#3f4454;line-height:13px;height:13px">英</div>
<svg style="left:729px;top:487.5px" width="12" height="12"><path d="M6.500 0.300 C8 3.500 7 7.500 2 9 C1.300 9.200 0.700 9.200 0.300 9.100 C2.500 12.300 8.500 12 10.600 8 C12.200 4.500 10 1 6.500 0.300 Z" fill="#3f4454"/></svg>
<svg style="left:747px;top:489px" width="10" height="10"><circle cx="1.800" cy="2.500" r="1.300" fill="#3f4454"/><path d="M6 4 C7.500 4 8 5.500 7.500 6.800 C7 8 6 8.500 5.200 8.500 C6 7.800 6.300 7 6 6.500 C5.200 6.300 5 5.500 5.200 4.800 C5.400 4.300 5.700 4 6 4 Z" fill="#3f4454"/></svg>
<svg style="left:762.5px;top:489.5px" width="14" height="10"><rect x="0.500" y="0.500" width="13" height="9" rx="1" fill="#3f4454"/><path d="M2 2.800 H12 M2 4.800 H12" stroke="#f4f4f4" stroke-width="1" stroke-dasharray="1.400 0.800"/><path d="M3.500 7.200 H10.500" stroke="#f4f4f4" stroke-width="1"/></svg>
<svg style="left:781.5px;top:488px" width="10" height="12"><circle cx="5" cy="3" r="2.300" fill="#b9dcc4"/><path d="M0.500 11.500 C0.500 7 3 6 5 6 C7 6 9.500 7 9.500 11.500 Z" fill="#b9dcc4"/></svg>
<svg style="left:797.5px;top:488px" width="13" height="13"><path d="M9 0.800 C7 0.500 5.200 2 5.500 4.500 L1 9.500 C0.300 10.500 1.800 12 2.800 11.200 L7.500 6.500 C10 7 12 5 11.500 3 L9.500 5 L7.500 3 Z" fill="#3f4454"/></svg>
</body></html>
